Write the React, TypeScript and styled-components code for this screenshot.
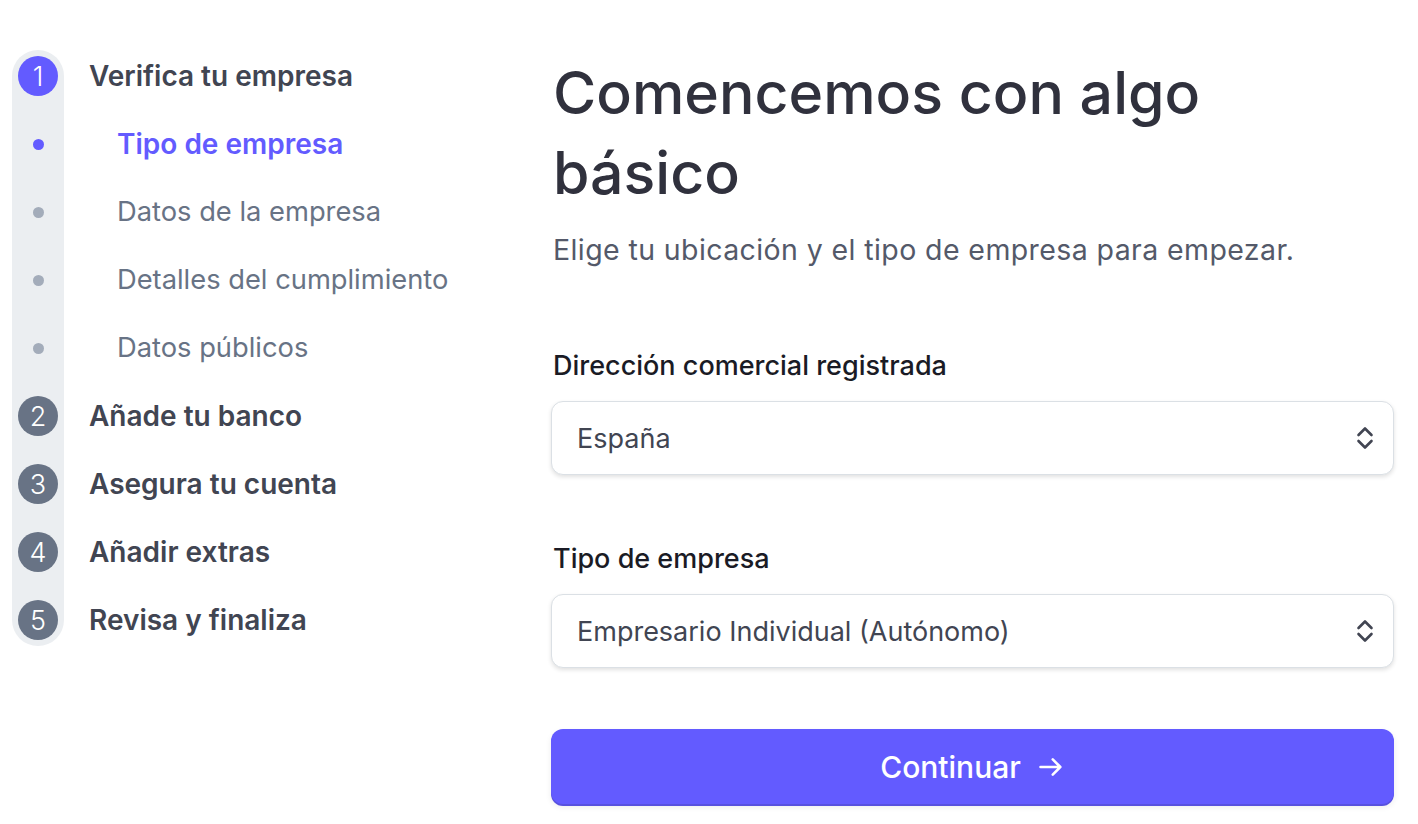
import { createGlobalStyle, styled } from "styled-components";

const GlobalStyle = createGlobalStyle`
  html, body {
    margin: 0;
    padding: 0;
    background: #ffffff;
    font-family: Inter, "Noto Sans", "Liberation Sans", sans-serif;
    -webkit-font-smoothing: antialiased;
  }
`;

type Item =
  | { kind: "step"; num: number; label: string; active?: boolean }
  | { kind: "sub"; label: string; active?: boolean };

const items: Item[] = [
  { kind: "step", num: 1, label: "Verifica tu empresa", active: true },
  { kind: "sub", label: "Tipo de empresa", active: true },
  { kind: "sub", label: "Datos de la empresa" },
  { kind: "sub", label: "Detalles del cumplimiento" },
  { kind: "sub", label: "Datos públicos" },
  { kind: "step", num: 2, label: "Añade tu banco" },
  { kind: "step", num: 3, label: "Asegura tu cuenta" },
  { kind: "step", num: 4, label: "Añadir extras" },
  { kind: "step", num: 5, label: "Revisa y finaliza" },
];

function UpDownIcon() {
  return (
    <Chevrons width="18" height="26" viewBox="0 0 18 26" fill="none">
      <path
        d="M2.5 10 L9 3.5 L15.5 10 M2.5 16 L9 22.5 L15.5 16"
        stroke="#414552"
        strokeWidth="2.6"
        strokeLinecap="round"
        strokeLinejoin="round"
      />
    </Chevrons>
  );
}

function ArrowIcon() {
  return (
    <svg width="28" height="28" viewBox="0 0 24 24" fill="none">
      <path
        d="M3 12 H20 M13.5 5.5 L20 12 L13.5 18.5"
        stroke="#ffffff"
        strokeWidth="2.2"
        strokeLinecap="round"
        strokeLinejoin="round"
      />
    </svg>
  );
}

export default function App() {
  return (
    <>
      <GlobalStyle />
      <Page>
        <Sidebar>
          <Rail>
            {items.map((it, i) =>
              it.kind === "step" ? (
                <Marker key={i}>
                  <Circle $active={it.active}>{it.num}</Circle>
                </Marker>
              ) : (
                <Marker key={i}>
                  <Dot $active={it.active} />
                </Marker>
              )
            )}
          </Rail>
          <Labels>
            {items.map((it, i) =>
              it.kind === "step" ? (
                <StepLabel key={i}>{it.label}</StepLabel>
              ) : (
                <SubLabel key={i} $active={it.active}>
                  {it.label}
                </SubLabel>
              )
            )}
          </Labels>
        </Sidebar>

        <Main>
          <Title>Comencemos con algo básico</Title>
          <Subtitle>Elige tu ubicación y el tipo de empresa para empezar.</Subtitle>

          <Field>
            <FieldLabel>Dirección comercial registrada</FieldLabel>
            <SelectBox>
              <span>España</span>
              <UpDownIcon />
            </SelectBox>
          </Field>

          <Field>
            <FieldLabel>Tipo de empresa</FieldLabel>
            <SelectBox>
              <span>Empresario Individual (Autónomo)</span>
              <UpDownIcon />
            </SelectBox>
          </Field>

          <PrimaryButton>
            Continuar
            <ArrowIcon />
          </PrimaryButton>
        </Main>
      </Page>
    </>
  );
}

const Page = styled.div`
  display: flex;
  padding: 50px 0 0 12px;
  min-height: 824px;
  box-sizing: border-box;
`;

const Sidebar = styled.nav`
  display: flex;
  align-items: flex-start;
  gap: 25px;
  width: 539px;
  flex-shrink: 0;
`;

const Rail = styled.div`
  width: 52px;
  padding: 6px;
  box-sizing: border-box;
  background: #ebeef1;
  border-radius: 26px;
  display: flex;
  flex-direction: column;
  gap: 28px;
`;

const Marker = styled.div`
  height: 40px;
  display: flex;
  align-items: center;
  justify-content: center;
`;

const Circle = styled.div<{ $active?: boolean }>`
  width: 40px;
  height: 40px;
  border-radius: 50%;
  background: ${(p) => (p.$active ? "#635bff" : "#687385")};
  color: #ffffff;
  font-size: 27px;
  font-weight: 300;
  display: flex;
  align-items: center;
  justify-content: center;
`;

const Dot = styled.div<{ $active?: boolean }>`
  width: 11px;
  height: 11px;
  border-radius: 50%;
  background: ${(p) => (p.$active ? "#635bff" : "#a3acba")};
`;

const Labels = styled.div`
  padding-top: 6px;
  display: flex;
  flex-direction: column;
  gap: 28px;
`;

const StepLabel = styled.div`
  height: 40px;
  line-height: 40px;
  font-size: 28px;
  font-weight: 600;
  color: #414552;
  white-space: nowrap;
`;

const SubLabel = styled.div<{ $active?: boolean }>`
  height: 40px;
  line-height: 40px;
  padding-left: 28px;
  font-size: ${(p) => (p.$active ? "28px" : "27.3px")};
  font-weight: ${(p) => (p.$active ? 600 : 400)};
  color: ${(p) => (p.$active ? "#635bff" : "#687385")};
  white-space: nowrap;
`;

const Main = styled.main`
  width: 843px;
  padding-top: 3px;
  display: flex;
  flex-direction: column;
`;

const Title = styled.h1`
  margin: 0 0 19px 2px;
  font-size: 59px;
  line-height: 80px;
  font-weight: 500;
  color: #30313d;
  max-width: 700px;
`;

const Subtitle = styled.p`
  margin: 0 0 82px 2px;
  font-size: 28.5px;
  line-height: 36px;
  letter-spacing: 0.4px;
  font-weight: 400;
  color: #545969;
`;

const Field = styled.div`
  display: flex;
  flex-direction: column;
  gap: 19px;
  margin-bottom: 68px;

  & + & {
    margin-bottom: 61px;
  }
`;

const FieldLabel = styled.label`
  margin-left: 2px;
  font-size: 27px;
  line-height: 32px;
  font-weight: 500;
  color: #1a1b25;
`;

const SelectBox = styled.div`
  height: 74px;
  box-sizing: border-box;
  border: 1px solid #dbe0e5;
  border-radius: 12px;
  box-shadow: 0 2px 4px rgba(0, 0, 0, 0.12);
  padding: 0 19px 0 25px;
  display: flex;
  align-items: center;
  justify-content: space-between;
  font-size: 27px;
  color: #414552;
  background: #ffffff;
`;

const Chevrons = styled.svg`
  flex-shrink: 0;
  display: block;
`;

const PrimaryButton = styled.button`
  height: 75px;
  border: none;
  border-radius: 12px;
  background: #635bff;
  box-shadow: 0 2px 0 #5851df, 0 3px 6px rgba(0, 0, 0, 0.08);
  color: #ffffff;
  font-family: inherit;
  font-size: 30px;
  font-weight: 500;
  display: flex;
  align-items: center;
  justify-content: center;
  gap: 16px;
  cursor: pointer;
`;
